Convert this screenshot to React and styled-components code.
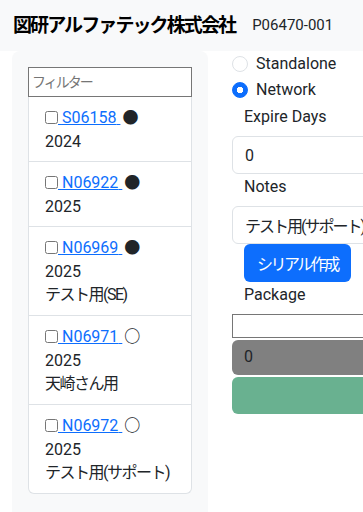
import styled, { createGlobalStyle } from "styled-components";

const GlobalStyle = createGlobalStyle`
  html, body {
    margin: 0;
    padding: 0;
    overflow: hidden;
    background: #fff;
  }
  body {
    font-family: Roboto, "Noto Sans CJK JP", sans-serif;
    font-size: 16px;
    line-height: 1.5;
    color: #212529;
  }
`;

const licenses = [
  { id: "S06158", filled: true, year: "2024" },
  { id: "N06922", filled: true, year: "2025" },
  { id: "N06969", filled: true, year: "2025", note: "テスト用(SE)" },
  { id: "N06971", filled: false, year: "2025", note: "天崎さん用" },
  { id: "N06972", filled: false, year: "2025", note: "テスト用(サポート)" },
];

const App = () => {
  return (
    <>
      <GlobalStyle />
      <Header>
        <Title>図研アルファテック株式会社</Title>
        <Code>P06470-001</Code>
      </Header>
      <Main>
        <Sidebar>
          <Filter placeholder="フィルター" />
          <List>
            {licenses.map((item) => (
              <Item key={item.id}>
                <Line>
                  <Check type="checkbox" />
                  <Link href="#"> {item.id} </Link>
                  <Dot $filled={item.filled}>{item.filled ? "●" : "○"}</Dot>
                </Line>
                <Line>{item.year}</Line>
                {item.note && <Note>{item.note}</Note>}
              </Item>
            ))}
          </List>
        </Sidebar>
        <Form>
          <RadioRow>
            <Radio type="radio" name="kind" />
            <span>Standalone</span>
          </RadioRow>
          <RadioRow>
            <Radio type="radio" name="kind" defaultChecked />
            <span>Network</span>
          </RadioRow>
          <Label>Expire Days</Label>
          <Field defaultValue="0" />
          <Label>Notes</Label>
          <Field $jp defaultValue="テスト用(サポート)" />
          <CreateButton>シリアル作成</CreateButton>
          <Label>Package</Label>
          <PlainInput />
          <Progress>0</Progress>
          <SuccessBar disabled />
        </Form>
      </Main>
    </>
  );
};

const Header = styled.header`
  display: flex;
  align-items: center;
  gap: 17px;
  height: 51px;
  padding: 0 13px;
  white-space: nowrap;
  background-color: #f8f9fa;
`;

const Title = styled.h1`
  flex-shrink: 0;
  margin: 0;
  font-size: 19px;
  font-weight: 700;
  letter-spacing: -1.9px;
  line-height: 1;
  color: #000;
`;

const Code = styled.span`
  flex-shrink: 0;
  font-size: 15px;
  color: #212529;
`;

const Main = styled.div`
  display: flex;
  gap: 24px;
  padding-left: 12px;
`;

const Sidebar = styled.aside`
  flex: 0 0 196px;
  box-sizing: border-box;
  min-height: 470px;
  padding: 16px;
  background-color: #f8f9fa;
  border-radius: 8px 8px 0 0;
`;

const Filter = styled.input`
  display: block;
  box-sizing: border-box;
  width: 100%;
  height: 30px;
  margin: 0;
  padding: 2px 3px;
  border: 1px solid #767676;
  border-radius: 0;
  font-family: inherit;
  font-size: 14px;
  background: #fff;

  &::placeholder {
    color: #757575;
    letter-spacing: -2px;
  }
`;

const List = styled.div`
  background: #fff;
  border: 1px solid #dee2e6;
  border-top: none;
  border-radius: 0 0 6px 6px;
`;

const Item = styled.div`
  padding: 8px 16px;

  & + & {
    border-top: 1px solid #dee2e6;
  }
`;

const Line = styled.div`
  line-height: 24px;
  padding-top: 1px;
  margin-bottom: -1px;
`;

const Note = styled.div`
  letter-spacing: -1.5px;
`;

const Check = styled.input`
  width: 13px;
  height: 13px;
  margin: 0;
  vertical-align: -1px;
`;

const Link = styled.a`
  color: #0d6efd;
  text-decoration: underline;
  white-space: pre;
`;

const Dot = styled.span`
  margin-left: 2px;
  color: #212529;
  font-weight: ${(p) => (p.$filled ? 400 : 700)};
`;

const Form = styled.div`
  display: flex;
  flex-direction: column;
  align-items: flex-start;
  flex: 0 0 320px;
  padding-top: 1px;
`;

const RadioRow = styled.label`
  display: flex;
  align-items: center;
  gap: 8px;
  min-height: 24px;
  margin-bottom: 2px;
`;

const Radio = styled.input`
  appearance: none;
  width: 16px;
  height: 16px;
  margin: 0;
  border: 1px solid #dee2e6;
  border-radius: 50%;
  background: #fff;

  &:checked {
    border-color: #0d6efd;
    background: radial-gradient(circle, #fff 0 3px, #0d6efd 3.5px);
  }
`;

const Label = styled.div`
  margin: 1px 0 7px 12px;
`;

const Field = styled.input`
  box-sizing: border-box;
  width: 100%;
  height: 38px;
  margin: 0;
  padding: 6px 12px;
  border: 1px solid #dee2e6;
  border-radius: 6px;
  font-family: inherit;
  font-size: 16px;
  letter-spacing: ${(p) => (p.$jp ? "-2px" : "normal")};
  color: #212529;
  background: #fff;
`;

const CreateButton = styled.button`
  height: 38px;
  margin-left: 12px;
  padding: 0 13px;
  border: none;
  border-radius: 6px;
  background-color: #0d6efd;
  color: #fff;
  font-family: inherit;
  font-size: 16px;
  letter-spacing: -2.5px;
`;

const PlainInput = styled.input`
  box-sizing: border-box;
  width: 100%;
  height: 24px;
  margin: 0;
  border: 1px solid #767676;
  border-radius: 0;
  background: #fff;
`;

const Progress = styled.div`
  box-sizing: border-box;
  width: 100%;
  height: 35px;
  margin-top: 2px;
  padding: 5px 12px;
  border-radius: 6px;
  background-color: #808080;
  color: #212529;
`;

const SuccessBar = styled.button`
  width: 100%;
  height: 37px;
  margin-top: 2px;
  border: none;
  border-radius: 6px;
  background-color: #69b190;
`;

export default App;
